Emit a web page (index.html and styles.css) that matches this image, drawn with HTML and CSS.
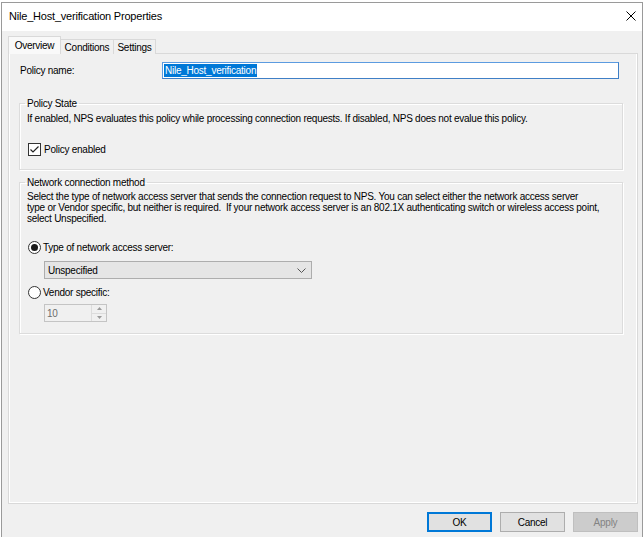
FILE: index.html
```html
<!DOCTYPE html>
<html>
<head>
<meta charset="utf-8">
<link rel="stylesheet" href="styles.css">
</head>
<body>
<div class="window">
  <div class="titlebar">
    <span class="title">Nile_Host_verification Properties</span>
    <svg class="close" width="10" height="10" viewBox="0 0 10 10"><path d="M0.5 0.5 L9.5 9.5 M9.5 0.5 L0.5 9.5" stroke="#000" stroke-width="1" fill="none"/></svg>
  </div>
  <div class="body">
    <div class="tabs">
      <div class="tab tab-active">Overview</div>
      <div class="tab tab-cond">Conditions</div>
      <div class="tab tab-set">Settings</div>
    </div>
    <div class="panel">
      <div class="name-row">
        <span class="name-label">Policy name:</span>
        <div class="textbox"><span class="sel">Nile_Host_verification</span></div>
      </div>
      <fieldset class="group group-state">
        <legend>Policy State</legend>
        <div class="desc">If enabled, NPS evaluates this policy while processing connection requests. If disabled, NPS does not evalue this policy.</div>
        <div class="check-row">
          <span class="checkbox"><svg width="11" height="11" viewBox="0 0 11 11"><path d="M1.5 5.5 L4 8 L9.5 2.5" stroke="#222" stroke-width="1.2" fill="none"/></svg></span>
          <span>Policy enabled</span>
        </div>
      </fieldset>
      <fieldset class="group group-net">
        <legend>Network connection method</legend>
        <div class="desc">Select the type of network access server that sends the connection request to NPS. You can select either the network access server<br>type or Vendor specific, but neither is required.&nbsp; If your network access server is an 802.1X authenticating switch or wireless access point,<br>select Unspecified.</div>
        <div class="radio-row radio-first">
          <span class="radio radio-on"><span class="dot"></span></span>
          <span>Type of network access server:</span>
        </div>
        <div class="select">
          <span>Unspecified</span>
          <svg width="9" height="5" viewBox="0 0 9 5"><path d="M0.5 0.5 L4.5 4.5 L8.5 0.5" stroke="#555" stroke-width="1" fill="none"/></svg>
        </div>
        <div class="radio-row radio-second">
          <span class="radio"></span>
          <span>Vendor specific:</span>
        </div>
        <div class="spinner">
          <span class="spin-val">10</span>
          <div class="spin-btns">
            <div class="spin-btn"><svg width="5" height="3" viewBox="0 0 5 3"><path d="M0 3 L2.5 0 L5 3 Z" fill="#9a9a9a"/></svg></div>
            <div class="spin-btn"><svg width="5" height="3" viewBox="0 0 5 3"><path d="M0 0 L2.5 3 L5 0 Z" fill="#9a9a9a"/></svg></div>
          </div>
        </div>
      </fieldset>
    </div>
    <div class="buttons">
      <div class="btn btn-default">OK</div>
      <div class="btn">Cancel</div>
      <div class="btn btn-disabled">Apply</div>
    </div>
  </div>
</div>
</body>
</html>
```
FILE: styles.css
```css
html, body {
  margin: 0;
  padding: 0;
  background: #ffffff;
  overflow: hidden;
}
body {
  font-family: "Liberation Sans", Arial, sans-serif;
  font-size: 10px;
  letter-spacing: -0.25px;
  line-height: 11px;
  color: #000;
}
.window {
  margin: 2px 0 0 1px;
  width: 640px;
  height: 540px;
  border: 1px solid #9a9a9a;
  background: #f0f0f0;
}
.titlebar {
  height: 28px;
  background: #ffffff;
  display: flex;
  align-items: center;
  justify-content: space-between;
  padding: 0 6px 0 7px;
}
.title {
  font-size: 11px;
  letter-spacing: -0.2px;
  margin-top: -2px;
}
.close {
  margin-top: -3px;
}
.body {
  padding: 5px 4px 0 6px;
}
.tabs {
  display: flex;
  align-items: flex-end;
  height: 18px;
  position: relative;
  z-index: 1;
  margin-bottom: -1px;
}
.tab {
  height: 15px;
  box-sizing: border-box;
  border: 1px solid #d9d9d9;
  border-bottom: none;
  background: #f0f0f0;
  display: flex;
  align-items: center;
  justify-content: center;
}
.tab-active {
  width: 53px;
  height: 18px;
  background: #f9f9f9;
  padding-bottom: 1px;
}
.tab-cond {
  width: 53px;
  border-left: none;
}
.tab-set {
  width: 42px;
  border-left: none;
}
.panel {
  height: 441px;
  border: 1px solid #d9d9d9;
  box-shadow: inset 1px 0 #ffffff, inset -1px -1px #ffffff;
  background: #f0f0f0;
  padding: 8px 14px 0 10px;
}
.name-row {
  display: flex;
  align-items: center;
  height: 17px;
}
.name-label {
  width: 143px;
  padding-left: 1px;
  box-sizing: border-box;
}
.textbox {
  width: 457px;
  height: 17px;
  box-sizing: border-box;
  border: 1px solid #5b9be0;
  border-right-color: #3f7fc6;
  border-bottom-color: #3f7fc6;
  background: #ffffff;
  display: flex;
  align-items: center;
  padding-left: 1px;
}
.sel {
  background: #0078d7;
  color: #ffffff;
  height: 13px;
  line-height: 13px;
  padding: 0 1px;
}
.group {
  margin: 0;
  border: 1px solid #dcdcdc;
  box-shadow: inset 1px 1px #ffffff, 1px 1px #ffffff;
  padding: 0 0 0 7px;
  min-width: 0;
}
.group legend {
  padding: 0 2px;
  margin-left: -2px;
  line-height: 11px;
}
.group-state {
  margin-top: 19px;
  height: 72px;
  box-sizing: border-box;
  padding-bottom: 12px;
}
.group-net {
  margin-top: 7px;
  height: 157px;
  box-sizing: border-box;
}
.desc {
  white-space: nowrap;
}
.group-state .desc {
  margin-top: 4px;
}
.group-net .desc {
  margin-top: 3px;
}
.check-row, .radio-row {
  display: flex;
  align-items: center;
  height: 13px;
  padding-left: 1px;
}
.check-row {
  margin-top: 19px;
}
.checkbox {
  width: 13px;
  height: 13px;
  box-sizing: border-box;
  border: 1px solid #333333;
  background: #ffffff;
  display: flex;
  align-items: center;
  justify-content: center;
  margin-right: 3px;
}
.radio {
  width: 13px;
  height: 13px;
  box-sizing: border-box;
  border: 1px solid #333333;
  border-radius: 50%;
  background: #ffffff;
  display: flex;
  align-items: center;
  justify-content: center;
  margin-right: 2px;
}
.dot {
  width: 7px;
  height: 7px;
  border-radius: 50%;
  background: #1a1a1a;
}
.radio-first {
  margin-top: 17px;
}
.select {
  margin: 7px 0 0 17px;
  width: 268px;
  height: 18px;
  box-sizing: border-box;
  border: 1px solid #adadad;
  background: #e5e5e5;
  display: flex;
  align-items: center;
  justify-content: space-between;
  padding: 0 5px 0 3px;
}
.radio-second {
  margin-top: 7px;
}
.spinner {
  margin: 5px 0 0 17px;
  width: 63px;
  height: 18px;
  box-sizing: border-box;
  border: 1px solid #c4c4c4;
  background: #f0f0f0;
  display: flex;
  align-items: center;
  justify-content: space-between;
  padding-left: 2px;
  color: #6d6d6d;
}
.spin-btns {
  width: 14px;
  height: 16px;
  display: flex;
  flex-direction: column;
  border-left: 1px solid #dcdcdc;
}
.spin-btn {
  flex: 1;
  display: flex;
  align-items: center;
  justify-content: center;
}
.spin-btn + .spin-btn {
  border-top: 1px solid #dcdcdc;
}
.buttons {
  display: flex;
  justify-content: flex-end;
  gap: 8px;
  margin-top: 8px;
}
.btn {
  width: 65px;
  height: 20px;
  box-sizing: border-box;
  border: 1px solid #adadad;
  background: #e1e1e1;
  display: flex;
  align-items: center;
  justify-content: center;
}
.btn-default {
  border: 2px solid #0078d7;
}
.btn-disabled {
  background: #cccccc;
  border-color: #bfbfbf;
  color: #838383;
}
```
